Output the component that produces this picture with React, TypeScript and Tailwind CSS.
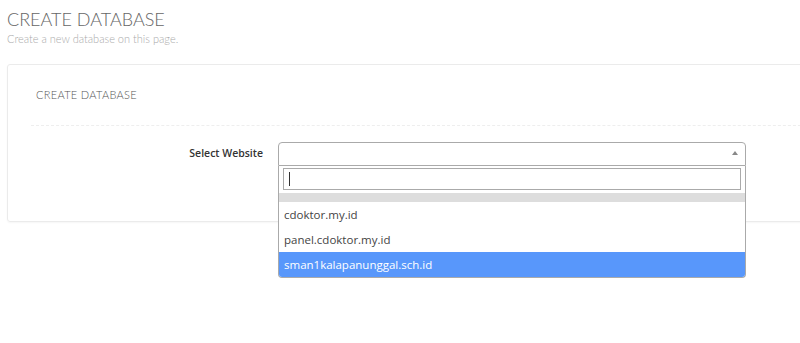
import React from "react";

const options = ["cdoktor.my.id", "panel.cdoktor.my.id", "sman1kalapanunggal.sch.id"];

export default function App() {
  const selected = 2;

  return (
    <div className="w-[800px] h-[343px] overflow-hidden bg-white font-['Open_Sans',sans-serif]">
      <div className="pl-[7px] pt-[9px]">
        <h1 className="font-['Lato',sans-serif] font-light text-[18px] leading-[21px] text-[#666]">
          CREATE DATABASE
        </h1>
        <p className="font-['Lato',sans-serif] font-light text-[11px] leading-[14px] text-[#aaa] mt-[2px]">
          Create a new database on this page.
        </p>
      </div>

      <div className="ml-[7px] mt-[18px] w-[830px] h-[158px] border border-[#ebebeb] rounded-[3px] shadow-[0_1px_2px_rgba(0,0,0,0.04)]">
        <div className="h-[60px] flex items-center pl-[28px]">
          <span className="font-['Lato',sans-serif] font-light text-[11px] text-[#555] tracking-[0.3px]">
            CREATE DATABASE
          </span>
        </div>
        <div className="ml-[23px] border-t border-dashed border-[#eeeeee]" />

        <div className="flex items-start pt-[16px]">
          <label className="w-[255px] text-right text-[10.5px] font-semibold text-[#333] leading-[23px]">
            Select Website
          </label>
          <div className="ml-[15px] relative w-[468px]">
            <div className="h-[24px] border border-[#aaa] rounded-t-[4px] bg-white flex items-center justify-end pr-[7px]">
              <span className="w-0 h-0 mb-[2px] border-l-[3px] border-r-[3px] border-b-[4px] border-l-transparent border-r-transparent border-b-[#888]" />
            </div>
            <div className="absolute left-0 right-0 top-full bg-white border border-t-0 border-[#aaa] rounded-b-[4px] z-10">
              <div className="px-[4px] pt-[2px] pb-[3px]">
                <div className="h-[22px] border border-[#aaa] flex items-center pl-[5px]">
                  <span className="w-px h-[14px] bg-[#333]" />
                </div>
              </div>
              <div className="h-[9px] bg-[#ddd]" />
              {options.map((o, i) => (
                <div
                  key={o}
                  className={`h-[25px] flex items-center px-[5px] text-[11.5px] ${
                    i === selected ? "bg-[#5897fb] text-white rounded-b-[3px]" : "text-[#444]"
                  }`}
                >
                  {o}
                </div>
              ))}
            </div>
          </div>
        </div>
      </div>
    </div>
  );
}
